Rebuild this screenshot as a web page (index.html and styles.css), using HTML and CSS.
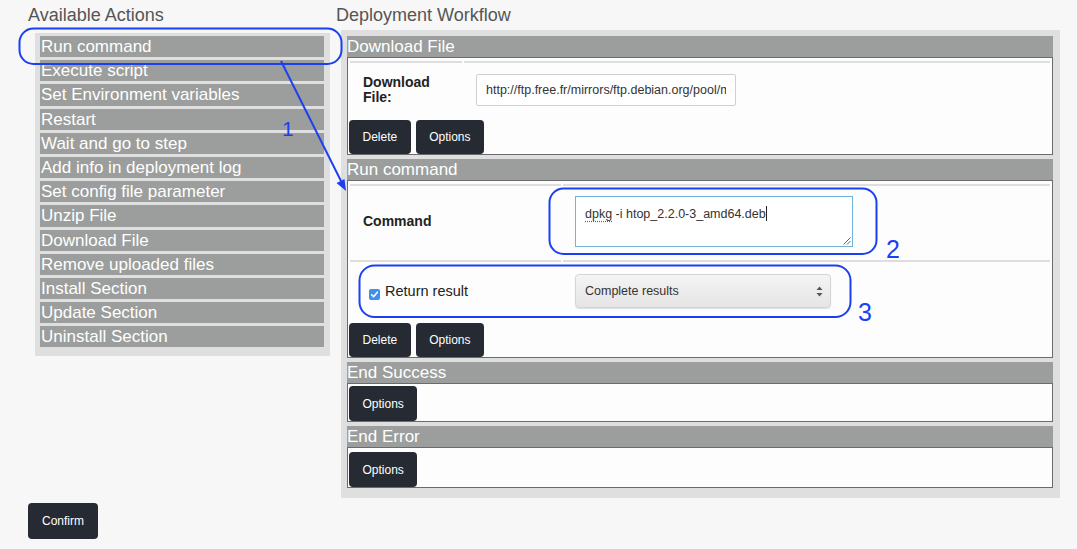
FILE: index.html
```html
<!DOCTYPE html>
<html lang="en">
<head>
<meta charset="utf-8">
<title>Deployment Workflow</title>
<link rel="stylesheet" href="styles.css">
</head>
<body>
<div class="page">
  <div class="columns">
    <div class="left">
      <div class="title">Available Actions</div>
      <div class="actions">
        <div class="action">Run command</div>
        <div class="action">Execute script</div>
        <div class="action">Set Environment variables</div>
        <div class="action">Restart</div>
        <div class="action">Wait and go to step</div>
        <div class="action">Add info in deployment log</div>
        <div class="action">Set config file parameter</div>
        <div class="action">Unzip File</div>
        <div class="action">Download File</div>
        <div class="action">Remove uploaded files</div>
        <div class="action">Install Section</div>
        <div class="action">Update Section</div>
        <div class="action">Uninstall Section</div>
      </div>
    </div>
    <div class="right">
      <div class="title">Deployment Workflow</div>
      <div class="workflow">
        <div class="step">
          <div class="step-head">Download File</div>
          <div class="step-body">
            <table class="fields">
              <tr>
                <td class="label label-dl">Download File:</td>
                <td class="value value-dl"><input class="text-input" type="text" value="http://ftp.free.fr/mirrors/ftp.debian.org/pool/main/h/htop/htop_2.2.0-3_amd64.deb"></td>
              </tr>
            </table>
            <div class="buttons buttons-dl">
              <button class="btn">Delete</button>
              <button class="btn">Options</button>
            </div>
          </div>
        </div>
        <div class="step">
          <div class="step-head">Run command</div>
          <div class="step-body">
            <table class="fields">
              <tr>
                <td class="label label-run cmd-cell">Command</td>
                <td class="value cmd-cell">
                  <div class="textarea"><span class="misspelled">dpkg</span> -i htop_2.2.0-3_amd64.deb<span class="caret"></span>
                    <svg class="grip" width="9" height="9" viewBox="0 0 9 9"><path d="M8.5 1.5 L1.5 8.5 M8.5 5 L5 8.5" stroke="#666" stroke-width="1" fill="none"/></svg>
                  </div>
                </td>
              </tr>
              <tr>
                <td class="label label-run res-cell">
                  <span class="check-wrap">
                    <span class="checkbox"><svg width="11" height="11" viewBox="0 0 11 11"><path d="M2.6 5.8 L4.6 7.8 L8.4 3.2" stroke="#fff" stroke-width="1.6" fill="none" stroke-linecap="round" stroke-linejoin="round"/></svg></span>
                    <span class="check-label">Return result</span>
                  </span>
                </td>
                <td class="value res-cell">
                  <div class="select">
                    <span>Complete results</span>
                    <svg class="select-arrows" width="7" height="11" viewBox="0 0 7 11"><path d="M3.5 0.5 L6.5 4 L0.5 4 Z M3.5 10.5 L6.5 7 L0.5 7 Z" fill="#555"/></svg>
                  </div>
                </td>
              </tr>
            </table>
            <div class="buttons buttons-run">
              <button class="btn">Delete</button>
              <button class="btn">Options</button>
            </div>
          </div>
        </div>
        <div class="step">
          <div class="step-head">End Success</div>
          <div class="step-body body-success">
            <button class="btn btn-tall">Options</button>
          </div>
        </div>
        <div class="step">
          <div class="step-head">End Error</div>
          <div class="step-body body-error">
            <button class="btn btn-tall">Options</button>
          </div>
        </div>
      </div>
    </div>
  </div>
  <button class="btn btn-confirm">Confirm</button>

  <svg class="annotations" width="1077" height="549" viewBox="0 0 1077 549">
    <g fill="none" stroke="#1b40f2" stroke-width="2">
      <rect x="19.5" y="28.5" width="322" height="35.5" rx="14"/>
      <rect x="549.5" y="188.5" width="327" height="65.5" rx="14"/>
      <rect x="359.5" y="265.5" width="491" height="51.5" rx="15"/>
      <line x1="281" y1="61" x2="341" y2="181"/>
    </g>
    <path d="M346 191 L336.5 183 L344.5 179 Z" fill="#1b40f2"/>
    <text x="282" y="136" class="anno-num anno-small">1</text>
    <text x="886" y="258" class="anno-num">2</text>
    <text x="858" y="321" class="anno-num">3</text>
  </svg>
</div>
</body>
</html>
```

FILE: styles.css
```css
html, body {
  margin: 0;
  padding: 0;
}

body {
  background: #f7f7f7;
  font-family: "Liberation Sans", Arial, Helvetica, sans-serif;
  color: #222;
}

.page {
  position: relative;
  width: 1077px;
  height: 549px;
  padding-left: 28px;
  box-sizing: border-box;
  overflow: hidden;
}

.columns {
  display: flex;
  align-items: flex-start;
}

.left {
  width: 302px;
}

.right {
  margin-left: 6px;
  width: 724px;
}

.title {
  height: 30px;
  line-height: 30px;
  font-size: 18px;
  color: #555;
  white-space: nowrap;
}

/* Available actions */
.actions {
  margin: 3px 0 0 7px;
  width: 295px;
  box-sizing: border-box;
  background: #dfdfdf;
  padding: 3px 6px 8.5px 5px;
  display: flex;
  flex-direction: column;
  gap: 3px;
}

.action {
  height: 21.2px;
  line-height: 21.2px;
  background: #9b9e9c;
  color: #fff;
  font-size: 17px;
  padding-left: 1px;
  white-space: nowrap;
}

/* Workflow */
.workflow {
  margin-left: 5px;
  width: 719px;
  box-sizing: border-box;
  background: #dfdfdf;
  padding: 6px 7px 10px 6px;
  display: flex;
  flex-direction: column;
  gap: 4px;
}

.step-head {
  height: 21px;
  line-height: 21px;
  background: #9b9e9c;
  color: #fff;
  font-size: 17px;
  white-space: nowrap;
}

.step-body {
  background: #fdfdfd;
  border: 1px solid #6b6b6b;
}

.fields {
  width: 100%;
  border-collapse: separate;
  border-spacing: 2px 3px;
}

.fields td {
  border-top: 2px solid #dedede;
  vertical-align: middle;
  padding: 0;
}

.label {
  font-size: 14px;
  font-weight: bold;
  line-height: 15px;
  color: #222;
  padding-left: 13px !important;
}

.label-dl {
  width: 112px;
  box-sizing: border-box;
  padding: 11px 13px 10px 13px !important;
}

.value-dl {
  padding: 11px 12px 10px 12px !important;
}

.label-run {
  width: 211px;
  box-sizing: border-box;
}

.cmd-cell {
  padding-top: 10px !important;
  padding-bottom: 10px !important;
}

.res-cell {
  padding-top: 12px !important;
  padding-bottom: 10px !important;
}

.fields .value {
  padding-left: 12px;
}

.text-input {
  display: block;
  width: 260px;
  height: 32px;
  box-sizing: border-box;
  border: 1px solid #cfcfcf;
  border-radius: 2px;
  background: #fff;
  padding: 0 9px;
  font-family: "Liberation Sans", Arial, sans-serif;
  font-size: 12.5px;
  color: #333;
  outline: none;
}

.textarea {
  position: relative;
  width: 278px;
  height: 51px;
  box-sizing: border-box;
  border: 1px solid #72b3dc;
  background: #fff;
  padding: 9px 9px;
  font-size: 12.5px;
  line-height: 15px;
  color: #333;
  font-weight: normal;
  white-space: nowrap;
}

.misspelled {
  text-decoration: underline dotted #e0332b;
  text-underline-offset: 3px;
}

.caret {
  display: inline-block;
  width: 1px;
  height: 15px;
  background: #222;
  vertical-align: -3px;
}

.grip {
  position: absolute;
  right: 1px;
  bottom: 1px;
}

.check-wrap {
  display: flex;
  align-items: center;
  gap: 5px;
  padding-left: 6px;
}

.checkbox {
  display: inline-flex;
  width: 11px;
  height: 11px;
  background: #3d8ff0;
  border-radius: 2px;
  margin-top: 7px;
}

.check-label {
  font-size: 14.5px;
  font-weight: normal;
  color: #222;
  line-height: 17px;
}

.select {
  width: 256px;
  height: 34px;
  box-sizing: border-box;
  border: 1px solid #d4d4d4;
  border-radius: 4px;
  background: linear-gradient(#f4f4f4, #e5e5e5);
  box-shadow: 0 1px 1px rgba(0, 0, 0, 0.12);
  display: flex;
  align-items: center;
  justify-content: space-between;
  padding: 0 7px 0 9px;
  font-size: 12.5px;
  color: #333;
}

.select-arrows {
  margin-top: 1px;
}

/* Buttons */
.buttons {
  display: flex;
  gap: 5px;
  padding-left: 1px;
}

.buttons-dl {
  margin-top: 1px;
}

.buttons-run {
  margin-top: 2px;
}

.btn {
  height: 34px;
  padding: 0 13.5px;
  border: none;
  border-radius: 4px;
  background: #262b33;
  color: #fff;
  font-family: "Liberation Sans", Arial, sans-serif;
  font-size: 12px;
  cursor: pointer;
}

.btn-tall {
  display: block;
  height: 35px;
  margin-left: 1px;
}

.body-success {
  padding-top: 2px;
}

.body-error {
  padding-top: 4px;
}

.btn-confirm {
  display: block;
  margin-top: 5px;
  height: 36px;
  padding: 0 14px;
}

/* Overlay annotations */
.annotations {
  position: absolute;
  left: 0;
  top: 0;
  pointer-events: none;
}

.anno-num {
  font-family: "Liberation Sans", Arial, sans-serif;
  font-size: 25px;
  fill: #1b40f2;
}

.anno-small {
  font-size: 21px;
}
```
